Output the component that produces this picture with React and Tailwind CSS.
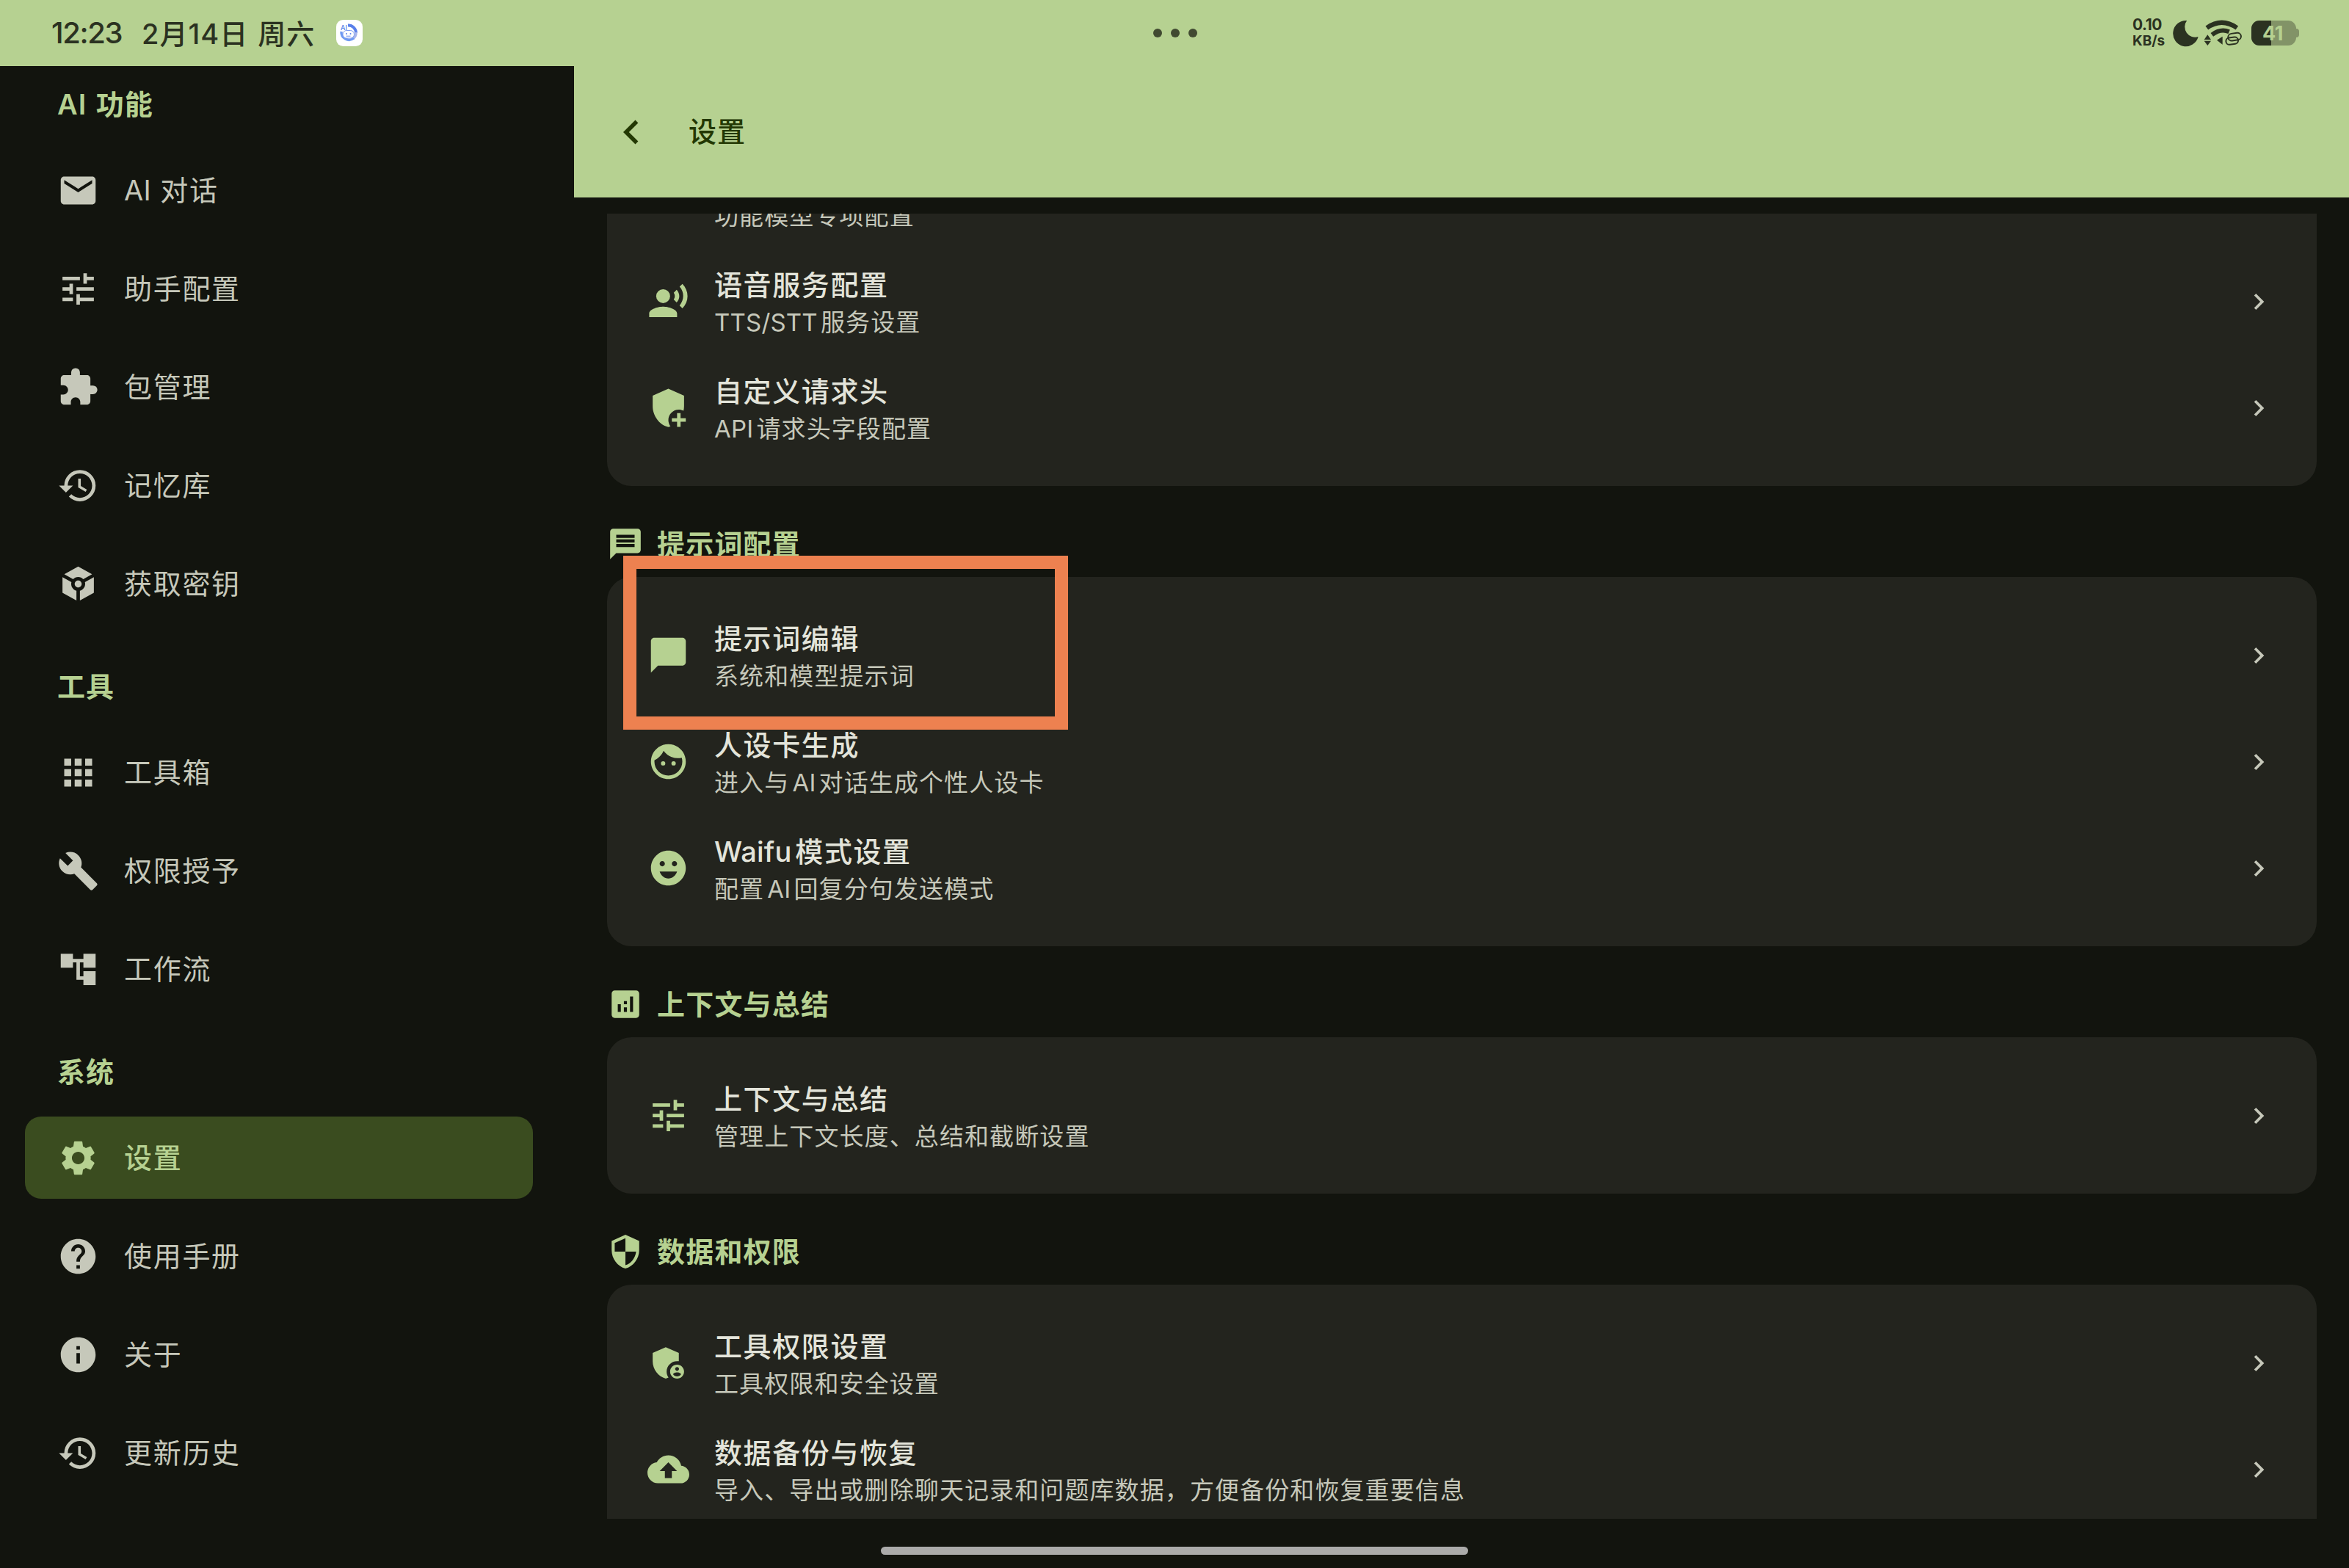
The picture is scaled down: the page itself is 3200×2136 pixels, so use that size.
import React, { useState } from "react";
import {
  MdAccountTree,
  MdAddModerator,
  MdAdminPanelSettings,
  MdAnalytics,
  MdApps,
  MdBackup,
  MdBuild,
  MdChatBubble,
  MdEmail,
  MdEmojiEmotions,
  MdExtension,
  MdFace,
  MdHelp,
  MdHistory,
  MdInfo,
  MdKeyboardArrowLeft,
  MdKeyboardArrowRight,
  MdMessage,
  MdRecordVoiceOver,
  MdSecurity,
  MdSettings,
  MdToken,
  MdTune,
} from "react-icons/md";

const menu = [
  {
    title: "AI 功能",
    items: [
      { icon: MdEmail, label: "AI 对话" },
      { icon: MdTune, label: "助手配置" },
      { icon: MdExtension, label: "包管理" },
      { icon: MdHistory, label: "记忆库" },
      { icon: MdToken, label: "获取密钥" },
    ],
  },
  {
    title: "工具",
    items: [
      { icon: MdApps, label: "工具箱" },
      { icon: MdBuild, label: "权限授予" },
      { icon: MdAccountTree, label: "工作流" },
    ],
  },
  {
    title: "系统",
    items: [
      { icon: MdSettings, label: "设置" },
      { icon: MdHelp, label: "使用手册" },
      { icon: MdInfo, label: "关于" },
      { icon: MdHistory, label: "更新历史" },
    ],
  },
];

const sections = [
  {
    rows: [
      { icon: MdTune, title: "功能模型配置", desc: "功能模型专项配置" },
      { icon: MdRecordVoiceOver, title: "语音服务配置", desc: "TTS/STT服务设置" },
      { icon: MdAddModerator, title: "自定义请求头", desc: "API请求头字段配置" },
    ],
  },
  {
    icon: MdMessage,
    title: "提示词配置",
    rows: [
      { icon: MdChatBubble, title: "提示词编辑", desc: "系统和模型提示词", marked: true },
      { icon: MdFace, title: "人设卡生成", desc: "进入与AI对话生成个性人设卡" },
      { icon: MdEmojiEmotions, title: "Waifu模式设置", desc: "配置AI回复分句发送模式" },
    ],
  },
  {
    icon: MdAnalytics,
    title: "上下文与总结",
    rows: [{ icon: MdTune, title: "上下文与总结", desc: "管理上下文长度、总结和截断设置" }],
  },
  {
    icon: MdSecurity,
    title: "数据和权限",
    rows: [
      { icon: MdAdminPanelSettings, title: "工具权限设置", desc: "工具权限和安全设置" },
      {
        icon: MdBackup,
        title: "数据备份与恢复",
        desc: "导入、导出或删除聊天记录和问题库数据，方便备份和恢复重要信息",
      },
    ],
  },
];

// latin runs sit a little tighter than the chinese text around them
function Mixed({ text }) {
  return text.split(/([A-Za-z/]+)/).map((part, i) =>
    i % 2 ? (
      <span key={i} className="tracking-[0.2px]">
        {part}
      </span>
    ) : (
      part
    )
  );
}

function AppBadge() {
  return (
    <svg viewBox="0 0 36 36" className="ml-[29px] size-9">
      <rect width="36" height="36" rx="9.5" fill="#fff" />
      <path d="M16 7.500A10.500 10.500 0 0 1 27 18" fill="none" stroke="#5a80ea" strokeWidth="4" />
      <path d="M27 17a10 10 0 0 1-4 8.500" fill="none" stroke="#a9b6ea" strokeWidth="3.500" />
      <path d="M7 16a10.500 10.500 0 0 0 17 9" fill="none" stroke="#6f9af2" strokeWidth="3.500" />
      <rect x="9" y="14.500" width="15.500" height="10.500" rx="5.200" fill="#fff" stroke="#7c9cf0" strokeWidth="1" />
      <circle cx="14" cy="19" r="1" fill="#5a80ea" />
      <circle cx="19.500" cy="19" r="1" fill="#5a80ea" />
      <path d="M13.500 22.200h6" stroke="#5a80ea" strokeWidth="0.900" />
      <text x="6" y="14" fontSize="9" fontFamily="Inter, sans-serif" fill="#4d79e6">
        AI
      </text>
    </svg>
  );
}

function MoonIcon() {
  return (
    <svg viewBox="360 80 106 110" className="ml-[10px] h-[37px] w-[35px]" fill="#2b3221">
      <path d="M418 82A53 53.500 0 1 0 465 149A43 43 0 0 1 418 82Z" />
    </svg>
  );
}

function WifiIcon() {
  return (
    <svg viewBox="480 76 168 120" className="ml-[5px] h-10 w-14" fill="none" stroke="#2b3221">
      <path d="M499 115Q560 72 622 115" strokeWidth="19" />
      <path d="M520 143Q556 116 590 131" strokeWidth="18" />
      <path d="M540 165L563 150V183Z" fill="#2b3221" stroke="none" />
      <path d="M502 143L516 163H488ZM502 187L516 168H488Z" fill="#2b3221" stroke="none" />
      <rect x="586" y="137" width="53" height="29" rx="14.500" strokeWidth="6" transform="rotate(-8 611 152)" />
      <rect x="577" y="154" width="50" height="28" rx="14" strokeWidth="6" transform="rotate(-8 602 167)" />
    </svg>
  );
}

function Battery() {
  return (
    <div className="relative ml-[11px] flex items-center">
      <div className="flex h-[34px] w-[61px] overflow-hidden rounded-[11px] bg-[#829367]">
        <div className="w-[27px] bg-[#2b3221]" />
      </div>
      <div className="h-[12px] w-[4px] rounded-r-[4px] bg-[#829367]" />
      <span className="absolute left-[15px] text-[27px] leading-none font-bold tracking-[-0.5px] text-[#b6d191]">
        41
      </span>
    </div>
  );
}

function StatusBar() {
  return (
    <div className="flex h-[90px] items-center justify-between bg-[#b6d191] pr-[68px] pl-[70px] text-[#2b3221]">
      <div className="flex w-[1400px] items-center font-medium">
        <span className="text-[40px] tracking-[-1.4px]">12:23</span>
        <span className="ml-[27px] pt-[2px] text-[38px] tracking-[1px] [word-spacing:2px]">2月14日 周六</span>
        <AppBadge />
      </div>
      <div className="flex gap-3">
        <i className="size-3 rounded-full bg-[#414a31]" />
        <i className="size-3 rounded-full bg-[#414a31]" />
        <i className="size-3 rounded-full bg-[#414a31]" />
      </div>
      <div className="flex w-[1400px] items-center justify-end">
        <div className="w-[45px] font-bold whitespace-nowrap">
          <div className="text-[21px] leading-[22px] tracking-[-0.5px]">0.10</div>
          <div className="text-[19px] leading-[22px]">KB/s</div>
        </div>
        <MoonIcon />
        <WifiIcon />
        <Battery />
      </div>
    </div>
  );
}

function Sidebar({ active, onSelect }) {
  return (
    <aside className="w-[782px] shrink-0 pt-6 pl-[34px]">
      {menu.map((group, i) => (
        <div key={group.title} className={i > 0 ? "pt-[56px]" : ""}>
          <h2 className="mb-8 pl-[44px] text-[38px] leading-[57px] font-semibold tracking-[1px] text-[#b6d191] [word-spacing:2px]">
            {group.title}
          </h2>
          <div className="flex flex-col gap-[22px]">
            {group.items.map((item) => {
              const selected = item.label === active;
              return (
                <button
                  key={item.label}
                  onClick={() => onSelect(item.label)}
                  className={`flex h-[112px] w-[692px] items-center gap-[34px] rounded-[22px] pl-[44px] text-[38px] tracking-[1.7px] ${
                    selected ? "bg-[#3a4c1f] font-medium text-[#b6d191]" : "text-[#c6c8ba]"
                  }`}
                >
                  <item.icon className="size-[57px]" />
                  <span>
                    <Mixed text={item.label} />
                  </span>
                </button>
              );
            })}
          </div>
        </div>
      ))}
    </aside>
  );
}

function SettingRow({ row }) {
  return (
    <div className="relative flex h-[145px] items-center pr-[57px] pl-[55px]">
      <row.icon className="size-[57px] text-[#b6d191]" />
      <div className="ml-[34px] flex-1 pt-[3px] [text-autospace:normal]">
        <div className="text-[38px] leading-[54px] font-medium tracking-[1.6px] text-[#e3e4da]">
          <Mixed text={row.title} />
        </div>
        <div className="text-[33px] leading-[48px] tracking-[1.1px] text-[#c6c8ba]">
          <Mixed text={row.desc} />
        </div>
      </div>
      <MdKeyboardArrowRight className="size-[44px] text-[#c6c8ba]" />
      {row.marked && (
        <div className="absolute -top-[63px] left-[22px] h-[237px] w-[606px] border-[18.5px] border-[#ed8150]" />
      )}
    </div>
  );
}

function SettingSection({ section }) {
  return (
    <section>
      {section.title && (
        <div className="flex h-[124px] items-center gap-[18px] pt-[34px] text-[#b6d191]">
          <section.icon className="size-[50px]" />
          <h3 className="text-[38px] font-semibold tracking-[1.2px]">{section.title}</h3>
        </div>
      )}
      <div className="rounded-[33px] bg-[#23241e] py-[34px]">
        {section.rows.map((row) => (
          <SettingRow key={row.title} row={row} />
        ))}
      </div>
    </section>
  );
}

export default function App() {
  const [active, setActive] = useState("设置");

  return (
    <div className="flex h-[2136px] w-[3200px] flex-col overflow-hidden bg-[#12140e] font-['Inter','Noto_Sans_CJK_SC',sans-serif]">
      <StatusBar />
      <div className="flex min-h-0 flex-1">
        <Sidebar active={active} onSelect={setActive} />
        <main className="flex flex-1 flex-col">
          <header className="flex h-[179px] items-center bg-[#b6d191] pl-[45px] text-[#233803]">
            <MdKeyboardArrowLeft className="size-[66px]" />
            <h1 className="ml-[45px] text-[38px] font-medium tracking-[1px]">{active}</h1>
          </header>
          <div className="mt-[22px] h-[1778px] overflow-hidden pr-[44px] pl-[45px]">
            {/* list is scrolled part way into the first card */}
            <div className="-mt-[132px]">
              {sections.map((section, i) => (
                <SettingSection key={i} section={section} />
              ))}
            </div>
          </div>
          <div className="mt-[38px] ml-[418px] h-[11px] w-[800px] rounded-full bg-[#ababaa]" />
        </main>
      </div>
    </div>
  );
}
